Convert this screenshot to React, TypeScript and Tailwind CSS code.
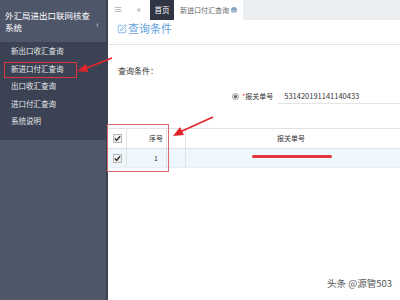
import { SquarePen } from "lucide-react";

const font = { fontFamily: '"Noto Sans CJK SC", "Liberation Sans", sans-serif' };

const menu = ["新出口收汇查询", "新进口付汇查询", "出口收汇查询", "进口付汇查询", "系统说明"];

function Check() {
  return (
    <span className="flex h-[9px] w-[9px] items-center justify-center border border-[#b8b8b8] bg-[#f2f2f2]">
      <svg width="7" height="7" viewBox="0 0 8 8">
        <path d="M1 4 L3 6.2 L7 1.5" fill="none" stroke="#333" strokeWidth="1.6" />
      </svg>
    </span>
  );
}

export default function App() {
  return (
    <div className="relative flex h-[300px] w-[400px] overflow-hidden bg-white text-[8px]" style={font}>
      {/* sidebar */}
      <div className="flex w-[108px] shrink-0 flex-col border-r-2 border-[#3a4050] bg-[#4e566a]">
        <div className="relative h-[42px] px-[5px] pt-[9px] text-[8.5px] leading-[12px] text-white">
          外汇局进出口联网核查
          <br />
          系统
          <span className="absolute right-[7px] top-[19px] text-[9px] text-[#cfd3da]">‹</span>
        </div>
        <div className="flex flex-col bg-[#3b4253] pb-[10px]">
          {menu.map((m) => (
            <div key={m} className="flex h-[17.5px] items-center pl-[11px] text-[7.5px] text-[#e6e8ec]">
              {m}
            </div>
          ))}
        </div>
      </div>

      {/* main */}
      <div className="flex min-w-0 flex-1 flex-col">
        <div className="flex h-[20px] items-center bg-white">
          <span className="flex w-[20px] justify-center text-[9px] text-[#888]">≡</span>
          <span className="flex w-[22px] justify-center text-[9px] text-[#999]">«</span>
          <span className="flex h-full w-[24px] items-center justify-center bg-[#2f3542] text-[7.5px] text-white">首页</span>
          <span className="flex h-full items-center gap-[2px] px-[6px] text-[7px] text-[#666]">
            新进口付汇查询
            <span className="flex h-[6px] w-[6px] items-center justify-center rounded-full bg-[#8aa5c4] text-[5px] leading-none text-white">×</span>
          </span>
          <div className="h-full flex-1 bg-[#eceff1]" />
        </div>

        <div className="flex h-[25px] items-start gap-[1px] border-b border-[#e5e5e5] pl-[9px] pt-[1px] text-[11px] leading-[15px] text-[#64a2dd]">
          <SquarePen size={10} strokeWidth={1.8} className="mt-[3px]" />
          查询条件
        </div>

        <div className="pl-[10px] pt-[20px] text-[8px] text-[#333]">查询条件：</div>

        <div className="mt-[12px] flex items-center pl-[124px]">
          <span className="flex h-[7px] w-[7px] items-center justify-center rounded-full border border-[#999] bg-[#eee]">
            <span className="h-[3px] w-[3px] rounded-full bg-[#555]" />
          </span>
          <span className="ml-[3px] text-[7px] text-[#333]">
            <span className="text-[#e33]">*</span>报关单号
          </span>
          <span className="ml-[5px] flex h-[15px] flex-1 items-center border-b border-[#e3e3e3] pl-[6px] text-[7.5px] text-[#333]">
            531420191141140433
          </span>
        </div>

        <div className="mt-[24px] border-t border-[#e2e2e2] text-[7px] text-[#333]">
          <div className="flex h-[20px] items-center border-b border-[#e2e2e2]">
            <div className="flex h-full w-[19px] items-center justify-center border-r border-[#e2e2e2]"><Check /></div>
            <div className="flex h-full w-[40px] items-center justify-end border-r border-[#e2e2e2] pr-[3px]">序号</div>
            <div className="h-full w-[19px] border-r border-[#e2e2e2]" />
            <div className="flex h-full flex-1 items-center justify-center pr-[4px]">报关单号</div>
          </div>
          <div className="flex h-[19px] items-center border-b border-[#e8eef2] bg-[#eef8fc]">
            <div className="flex h-full w-[19px] items-center justify-center border-r border-[#e2e2e2]"><Check /></div>
            <div className="flex h-full w-[40px] items-center justify-end border-r border-[#e2e2e2] pr-[8px]">1</div>
            <div className="h-full w-[19px] border-r border-[#e2e2e2]" />
            <div className="flex h-full flex-1 items-start pl-[66px] pt-[6px]">
              <span className="h-[3px] w-[80px] rounded-full bg-[#e8343c]" />
            </div>
          </div>
        </div>
      </div>

      {/* annotations */}
      <div className="absolute left-[4px] top-[62px] h-[16px] w-[73px] border border-[#d9363e]" />
      <div className="absolute left-[107px] top-[124px] h-[48px] w-[62px] border border-[#d9686e]" />
      <svg className="absolute left-0 top-0" width="400" height="300">
        <line x1="112" y1="58" x2="84" y2="69" stroke="#e3252b" strokeWidth="1.6" />
        <polygon points="77,71 86,64 88,72" fill="#e3252b" />
        <line x1="213" y1="117" x2="180" y2="132" stroke="#e3252b" strokeWidth="1.6" />
        <polygon points="173,136 180,127 184,135" fill="#e3252b" />
      </svg>

      <div className="absolute bottom-[10px] right-[8px] text-[9.5px] text-[#555]">头条 @源管503</div>
    </div>
  );
}
